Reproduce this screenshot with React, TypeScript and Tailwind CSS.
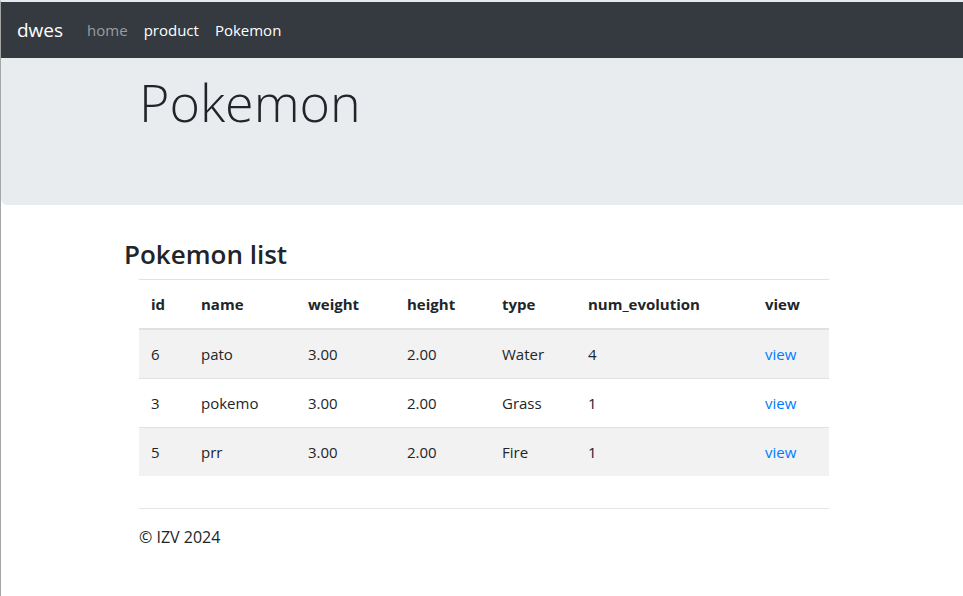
const rows = [
  { id: 6, name: 'pato', weight: '3.00', height: '2.00', type: 'Water', evolution: 4 },
  { id: 3, name: 'pokemo', weight: '3.00', height: '2.00', type: 'Grass', evolution: 1 },
  { id: 5, name: 'prr', weight: '3.00', height: '2.00', type: 'Fire', evolution: 1 },
];

const columns = [
  { label: 'id', width: 'w-[50px]' },
  { label: 'name', width: 'w-[107px]' },
  { label: 'weight', width: 'w-[99px]' },
  { label: 'height', width: 'w-[95px]' },
  { label: 'type', width: 'w-[86px]' },
  { label: 'num_evolution', width: 'w-[177px]' },
  { label: 'view', width: 'w-[76px]' },
];

function Navbar() {
  return (
    <nav className="flex h-14 items-center bg-[#343a40] px-4 text-white">
      <a href="#" className="mr-6 text-[19px] leading-[30px]">dwes</a>
      <div className="flex gap-4">
        <a href="#" className="text-[#9a9da0]">home</a>
        <a href="#">product</a>
        <a href="#">Pokemon</a>
      </div>
    </nav>
  );
}

function PokemonTable() {
  return (
    <table className="w-full table-fixed border-separate border-spacing-0 text-left">
      <thead>
        <tr>
          {columns.map((c) => (
            <th key={c.label} className={`${c.width} border-t border-b-2 border-[#dee2e6] px-3 py-3 font-bold`}>
              {c.label}
            </th>
          ))}
        </tr>
      </thead>
      <tbody className="[&_td]:border-t [&_td]:border-[#dee2e6] [&_td]:px-3 [&_td]:py-3 [&_tr:first-child_td]:border-t-0 [&_tr:nth-child(odd)]:bg-[#f2f2f2]">
        {rows.map((r) => (
          <tr key={r.id}>
            <td>{r.id}</td>
            <td>{r.name}</td>
            <td>{r.weight}</td>
            <td>{r.height}</td>
            <td>{r.type}</td>
            <td>{r.evolution}</td>
            <td><a href="#" className="text-[#007bff]">view</a></td>
          </tr>
        ))}
      </tbody>
    </table>
  );
}

export default function App() {
  return (
    <div className="min-h-screen border-t-2 border-l border-t-[#e6eaec] border-l-[#a5a5a5] bg-white font-['Segoe_UI','Open_Sans',sans-serif] text-[15px] leading-6 text-[#212529]">
      <Navbar />
      <header className="rounded-bl-md bg-[#e9ecef] pt-2.5 pb-[70px] pl-1">
        <div className="mx-auto max-w-[720px] px-[15px]">
          <h1 className="text-[52px] leading-[67px] font-light">Pokemon</h1>
        </div>
      </header>
      <main className="mt-8 pl-1">
        <div className="mx-auto max-w-[720px]">
          <h3 className="mb-2 text-[26px] leading-[34px] font-semibold">Pokemon list</h3>
          <div className="px-[15px]">
            <PokemonTable />
            <hr className="mt-8 mb-4 border-[#e5e5e5]" />
          </div>
        </div>
      </main>
      <footer className="pl-1">
        <div className="mx-auto max-w-[720px] px-[15px]">
          <p className="text-base">© IZV 2024</p>
        </div>
      </footer>
    </div>
  );
}
